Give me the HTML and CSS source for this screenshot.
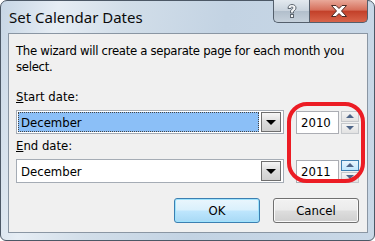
FILE: index.html
```html
<!DOCTYPE html>
<html>
<head>
    <title>Set Calendar Dates</title>
    <link rel="stylesheet" href="styles.css">
</head>
<body>
    <div class="window">
        <div class="titlebar">
            <span class="title">Set Calendar Dates</span>
            <div class="caption-buttons">
                <div class="cap-btn help">
                    <svg width="14" height="16" viewBox="0 0 14 16">
                        <path d="M3 5.5 C3 2.5 5 1.5 7 1.5 C9.5 1.5 11 3 11 5 C11 7 9 7.5 8.5 8.5 L8.5 10 L5.5 10 L5.5 8 C5.5 6.5 8 6 8 5 C8 4.3 7.6 4 7 4 C6.3 4 6 4.5 6 5.5 Z" fill="#f4f6f8" stroke="#5d6670" stroke-width="1"/>
                        <rect x="5.5" y="11.5" width="3" height="3" fill="#f4f6f8" stroke="#5d6670" stroke-width="1"/>
                    </svg>
                </div>
                <div class="cap-btn close">
                    <svg width="18" height="14" viewBox="0 0 18 14">
                        <path d="M1.5 1.5 L6 1.5 L9 4.5 L12 1.5 L16.5 1.5 L11.5 7 L16.5 12.5 L12 12.5 L9 9.5 L6 12.5 L1.5 12.5 L6.5 7 Z" fill="#ffffff" stroke="#4a2a25" stroke-width="1" stroke-linejoin="round"/>
                    </svg>
                </div>
            </div>
        </div>

        <div class="client">
            <p class="intro">The wizard will create a separate page for each month you select.</p>

            <label class="field-label"><u>S</u>tart date:</label>
            <div class="row">
                <div class="combo">
                    <span class="combo-text selected">December</span>
                    <span class="drop-btn"><i class="arrow"></i></span>
                </div>
                <div class="spinner">
                    <span class="spin-text">2010</span>
                    <div class="spin-btns">
                        <span class="spin-btn"><i class="tri up"></i></span>
                        <span class="spin-btn"><i class="tri down"></i></span>
                    </div>
                </div>
            </div>

            <label class="field-label"><u>E</u>nd date:</label>
            <div class="row">
                <div class="combo">
                    <span class="combo-text">December</span>
                    <span class="drop-btn"><i class="arrow"></i></span>
                </div>
                <div class="spinner">
                    <span class="spin-text">2011</span>
                    <div class="spin-btns">
                        <span class="spin-btn hot"><i class="tri up"></i></span>
                        <span class="spin-btn"><i class="tri down"></i></span>
                    </div>
                </div>
            </div>

            <div class="actions">
                <button class="btn default">OK</button>
                <button class="btn">Cancel</button>
            </div>

            <!-- annotation drawn over the year spinners -->
            <div class="highlight"></div>
        </div>
    </div>
</body>
</html>
```

FILE: styles.css
```css
body {
    margin: 0;
    background: #fff;
    font-family: "DejaVu Sans Condensed", "DejaVu Sans", sans-serif;
    font-size: 13px;
    color: #000;
}
.window {
    width: 375px;
    height: 241px;
    box-sizing: border-box;
    border: 1px solid #4c5866;
    border-radius: 7px 7px 6px 6px;
    background: linear-gradient(100deg, #c7d6e5 0%, #e6edf4 14%, #d2dee9 30%, #c3d3e3 55%, #c9d8e7 100%);
    display: flex;
    flex-direction: column;
}
.titlebar {
    height: 32px;
    display: flex;
    align-items: flex-start;
    justify-content: space-between;
    flex-shrink: 0;
}
.title {
    font-family: "Noto Sans", sans-serif;
    font-size: 15px;
    color: #0b0b0b;
    padding: 6px 0 0 8px;
}
.caption-buttons {
    display: flex;
    margin-right: 6px;
    margin-top: -1px;
}
.cap-btn {
    height: 23px;
    display: flex;
    align-items: center;
    justify-content: center;
    box-sizing: border-box;
    border: 1px solid #545f6c;
    border-top: none;
}
.help {
    width: 36px;
    border-radius: 0 0 0 5px;
    border-right: none;
    background: linear-gradient(#e3e9ef 0%, #c9d3dd 48%, #b2bfcc 52%, #c6d1dc 100%);
}
.close {
    width: 59px;
    border-radius: 0 0 5px 0;
    background: linear-gradient(#e9a99a 0%, #d6705c 45%, #c3412a 52%, #d8644a 100%);
}
.client {
    position: relative;
    flex: 1;
    margin: 0 6px 7px 7px;
    border: 1px solid #8a96a3;
    background: #f0f0f0;
    padding: 9px 8px 9px 7px;
    display: flex;
    flex-direction: column;
}
.intro {
    margin: 0;
    line-height: 16px;
    letter-spacing: -0.3px;
}
.field-label {
    display: block;
    line-height: 16px;
    margin-top: 14px;
}
.field-label + .row {
    margin-top: 5px;
}
.row + .field-label {
    margin-top: 4px;
}
.row {
    display: flex;
    align-items: center;
}
.combo {
    width: 269px;
    height: 24px;
    box-sizing: border-box;
    border: 1px solid #a5acb5;
    background: #fff;
    display: flex;
    align-items: center;
    padding: 1px;
}
.combo-text {
    flex: 1;
    height: 100%;
    box-sizing: border-box;
    padding-left: 3px;
    display: flex;
    align-items: center;
}
.combo-text.selected {
    background: #8bbff7;
    outline: 1px dotted #444;
    outline-offset: -1px;
}
.drop-btn {
    width: 20px;
    height: 20px;
    box-sizing: border-box;
    margin-left: 2px;
    margin-right: 1px;
    border: 1px solid #6f6f6f;
    background: linear-gradient(#f6f6f6, #dcdcdc 50%, #cfcfcf);
    display: flex;
    align-items: center;
    justify-content: center;
}
.arrow {
    width: 0;
    height: 0;
    border-left: 5px solid transparent;
    border-right: 5px solid transparent;
    border-top: 5px solid #000;
}
.spinner {
    display: flex;
    align-items: center;
    margin-left: 12px;
    gap: 2px;
}
.spin-text {
    width: 43px;
    height: 23px;
    box-sizing: border-box;
    border: 1px solid #abadb3;
    background: #fff;
    padding-left: 4px;
    display: flex;
    align-items: center;
}
.spin-btns {
    display: flex;
    flex-direction: column;
}
.spin-btn {
    width: 18px;
    height: 11px;
    box-sizing: border-box;
    border: 1px solid #c5c8cc;
    background: linear-gradient(#f4f4f4, #e2e2e2);
    display: flex;
    align-items: center;
    justify-content: center;
}
.spin-btn + .spin-btn {
    margin-top: 1px;
}
.spin-btn.hot {
    border-color: #3c7fb1;
    background: linear-gradient(#eaf6fd, #bee6fd);
}
.tri {
    width: 0;
    height: 0;
    border-left: 4px solid transparent;
    border-right: 4px solid transparent;
}
.tri.up {
    border-bottom: 4px solid #4e6588;
}
.tri.down {
    border-top: 4px solid #4e6588;
}
.actions {
    margin-top: auto;
    display: flex;
    justify-content: flex-end;
    gap: 13px;
}
.btn {
    width: 86px;
    height: 25px;
    font-family: inherit;
    font-size: 13px;
    color: #000;
    border: 1px solid #707070;
    border-radius: 3px;
    background: linear-gradient(#f2f2f2 0%, #ebebeb 48%, #dddddd 52%, #cfcfcf 100%);
    box-shadow: inset 0 0 0 1px #fafafa;
}
.btn.default {
    border-color: #3c7fb1;
    background: linear-gradient(#eaf6fd 0%, #d9f0fc 48%, #bee6fd 52%, #a7d9f5 100%);
    box-shadow: inset 0 0 0 1px #9ee3fd;
}
.highlight {
    position: absolute;
    left: 278px;
    top: 68px;
    width: 78px;
    height: 81px;
    box-sizing: border-box;
    border: 4px solid #ec1c24;
    border-radius: 20px;
}
```
